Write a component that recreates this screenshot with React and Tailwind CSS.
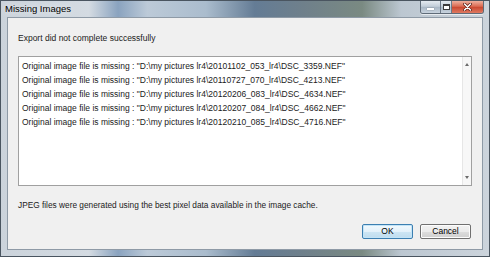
import React from "react";

const missing = [
  "20101102_053_lr4\\DSC_3359.NEF",
  "20110727_070_lr4\\DSC_4213.NEF",
  "20120206_083_lr4\\DSC_4634.NEF",
  "20120207_084_lr4\\DSC_4662.NEF",
  "20120210_085_lr4\\DSC_4716.NEF",
];

const CaptionButtons = () => (
  <div className="absolute right-[5px] top-0 flex h-[13px] overflow-hidden rounded-b-[3px] border border-t-0 border-[#5f6b78] shadow-[0_1px_0_rgba(255,255,255,0.6)]">
    <div className="flex w-[20px] items-center justify-center border-r border-[#6d7987] bg-[linear-gradient(180deg,#e4eaf0_0%,#c3ced9_45%,#a9b7c5_50%,#c8d3de_100%)]">
      <div className="mt-[4px] h-[2px] w-[7px] bg-white shadow-[0_0_1px_#333]" />
    </div>
    <div className="flex w-[11px] items-center justify-center border-r border-[#6d7987] bg-[linear-gradient(180deg,#e4eaf0_0%,#c3ced9_45%,#a9b7c5_50%,#c8d3de_100%)]">
      <div className="h-[6px] w-[7px] border border-t-2 border-[#3b3b3b] bg-white" />
    </div>
    <div className="flex w-[31px] items-center justify-center bg-[linear-gradient(180deg,#eeb09e_0%,#da6a52_45%,#c9472f_50%,#de7a62_100%)]">
      <svg width="9" height="8" viewBox="0 0 9 8">
        <path d="M1.5 1 L7.5 7 M7.5 1 L1.5 7" stroke="#5a1f15" strokeWidth="3" strokeLinecap="round" />
        <path d="M1.5 1 L7.5 7 M7.5 1 L1.5 7" stroke="#ffffff" strokeWidth="1.6" strokeLinecap="round" />
      </svg>
    </div>
  </div>
);

const Button = ({ children, focused }) => (
  <button
    className={`flex h-[15px] w-[51px] items-center justify-center rounded-[2px] border text-[8.5px] leading-none text-black ${
      focused
        ? "border-[#3c7fb1] bg-[linear-gradient(180deg,#f2f9fd_0%,#e3f1fa_50%,#cde6f4_51%,#bfdcee_100%)] shadow-[inset_0_0_0_1px_#c3e4f7]"
        : "border-[#707070] bg-[linear-gradient(180deg,#f2f2f2_0%,#ebebeb_50%,#dddddd_51%,#cfcfcf_100%)] shadow-[inset_0_0_0_1px_#fcfcfc]"
    }`}
  >
    {children}
  </button>
);

export default function App() {
  return (
    <div
      className="relative flex h-[257px] w-[490px] flex-col overflow-hidden border border-[#4a5560] bg-[linear-gradient(90deg,#cbd3db_0%,#d4dbe2_18%,#8aa3bf_24%,#bccad8_30%,#aabccd_42%,#647c95_52%,#6f808b_62%,#7a8a82_74%,#bcc7d1_82%,#ccd4dc_100%)] text-[#1b1b1b]"
      style={{ fontFamily: '"Liberation Sans", Arial, sans-serif' }}
    >
      <div className="flex h-[16px] shrink-0 items-center pl-[4px] text-[9.5px] text-black [text-shadow:0_0_6px_rgba(255,255,255,0.9)]">
        Missing Images
      </div>
      <CaptionButtons />

      <div className="mx-[6px] mb-[6px] flex flex-1 flex-col border border-[#8e9aa6] bg-[#f0f0f0] px-[10px]">
        <div className="mt-[14px] h-[12px] text-[8.5px] leading-[12px]">
          Export did not complete successfully
        </div>

        <div className="mt-[12px] flex h-[130px] border border-[#a0a0a0] bg-white">
          <div className="flex-1 pl-[3px] pt-[2px]">
            {missing.map((m) => (
              <div key={m} className="h-[14px] text-[8.5px] leading-[14px] whitespace-nowrap">
                Original image file is missing : "D:\my pictures lr4\{m}"
              </div>
            ))}
          </div>
          <div className="flex w-[9px] flex-col items-center justify-between border-l border-[#e6e6e6] bg-[#f7f7f7] py-[6px]">
            <div className="h-0 w-0 border-x-[2.5px] border-b-[3px] border-x-transparent border-b-[#6b6b6b]" />
            <div className="h-0 w-0 border-x-[2.5px] border-t-[3px] border-x-transparent border-t-[#6b6b6b]" />
          </div>
        </div>

        <div className="mt-[13px] h-[12px] text-[8.3px] leading-[12px]">
          JPEG files were generated using the best pixel data available in the image cache.
        </div>

        <div className="mt-[13px] flex justify-end gap-[7px] pr-[1px]">
          <Button focused>OK</Button>
          <Button>Cancel</Button>
        </div>
      </div>
    </div>
  );
}
